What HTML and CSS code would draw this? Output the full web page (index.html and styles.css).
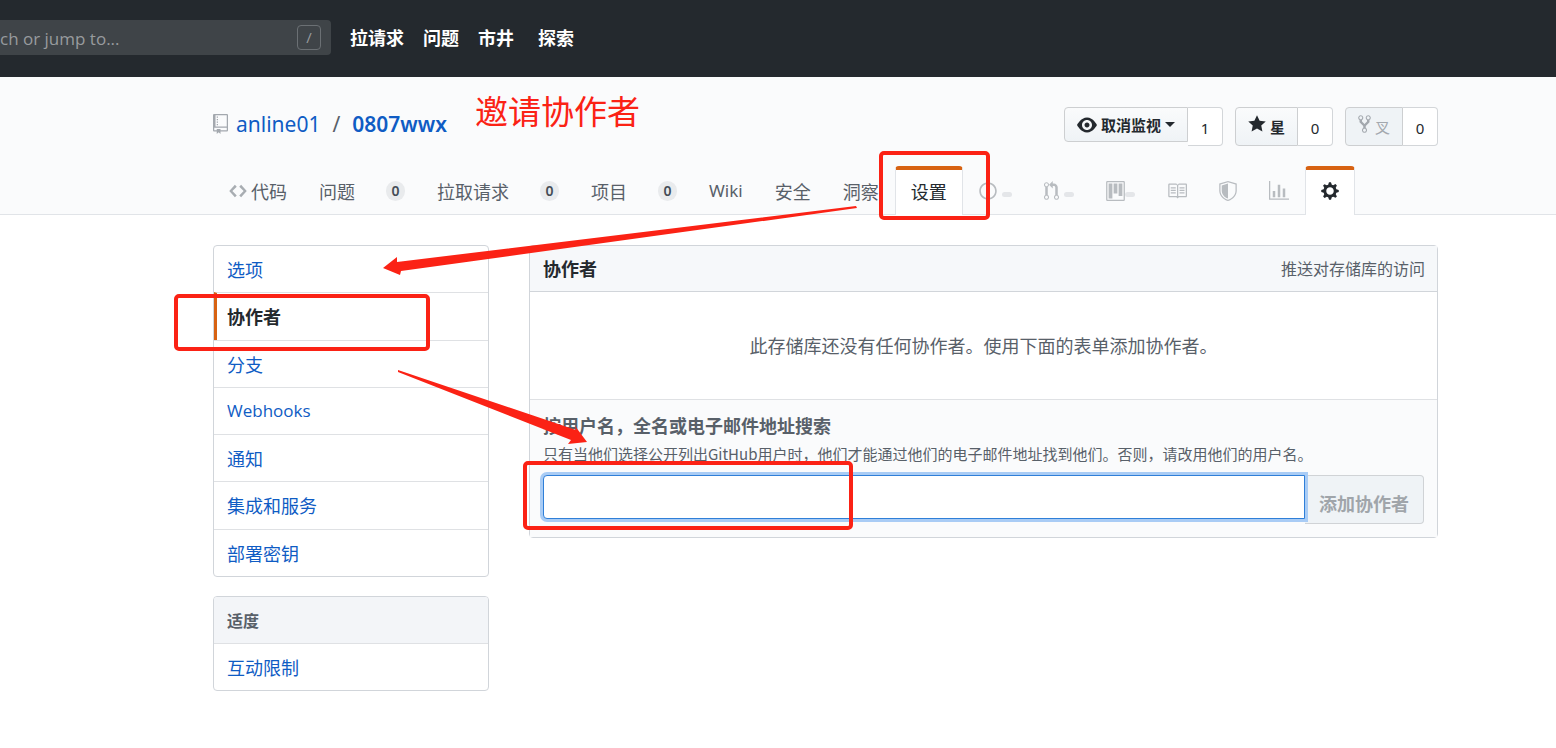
FILE: index.html
```html
<!DOCTYPE html>
<html lang="zh-CN">
<head>
<meta charset="utf-8">
<title>协作者</title>
<link rel="stylesheet" href="styles.css">
</head>
<body>
<header class="topbar">
  <form class="search">
    <input class="search-input" type="text" placeholder="ch or jump to..." aria-label="Search">
    <span class="slash">/</span>
  </form>
  <nav class="topnav">
    <a href="#">拉请求</a><a href="#">问题</a><a href="#">市井</a><a href="#" class="topnav-last">探索</a>
  </nav>
</header>

<div class="pagehead">
  <div class="repo-row">
    <h1 class="repo-title">
      <svg class="icon-muted" width="15" height="20" viewBox="0 0 12 16" fill="currentColor"><path d="M4 9H3V8h1v1zm0-3H3v1h1V6zm0-2H3v1h1V4zm0-2H3v1h1V2zm8-1v12c0 .55-.45 1-1 1H6v2l-1.500-1.500L3 16v-2H1c-.55 0-1-.45-1-1V1c0-.55.45-1 1-1h10c.55 0 1 .45 1 1zm-1 10H1v2h2v-1h3v1h5v-2zm0-10H2v9h9V1z"/></svg>
      <a href="#">anline01</a><span class="divider">/</span><a href="#" class="repo-name">0807wwx</a>
    </h1>
    <div class="actions">
      <div class="action">
        <button class="btn btn-watch" type="button">
          <svg width="20" height="20" viewBox="0 0 16 16" fill="currentColor"><path d="M8.060 2C3 2 0 8 0 8s3 6 8.060 6C13 14 16 8 16 8s-3-6-7.940-6zM8 12c-2.200 0-4-1.780-4-4 0-2.200 1.800-4 4-4 2.220 0 4 1.800 4 4 0 2.220-1.780 4-4 4zm2-4c0 1.110-.89 2-2 2-1.110 0-2-.89-2-2 0-1.110.89-2 2-2 1.110 0 2 .89 2 2z"/></svg>
          取消监视<span class="caret"></span>
        </button><a href="#" class="count">1</a>
      </div>
      <div class="action">
        <button class="btn" type="button">
          <svg class="raised" width="18" height="20" viewBox="0 0 14 16" fill="currentColor"><path d="M14 6l-4.900-.64L7 1 4.900 5.360 0 6l3.600 3.260L2.670 14 7 11.670 11.330 14l-.93-4.740z"/></svg>
          星
        </button><a href="#" class="count">0</a>
      </div>
      <div class="action">
        <button class="btn btn-fork" type="button" disabled>
          <svg class="raised" width="13" height="20" viewBox="0 0 10 16" fill="currentColor"><path d="M8 1a1.993 1.993 0 0 0-1 3.720V6L5 8 3 6V4.720A1.993 1.993 0 0 0 2 1a1.993 1.993 0 0 0-1 3.720V6.500l3 3v1.780A1.993 1.993 0 0 0 5 15a1.993 1.993 0 0 0 1-3.720V9.500l3-3V4.720A1.993 1.993 0 0 0 8 1zM2 4.200C1.340 4.200.8 3.650.8 3c0-.65.55-1.200 1.200-1.200.65 0 1.200.55 1.200 1.200 0 .65-.55 1.200-1.200 1.200zm3 10c-.66 0-1.200-.55-1.200-1.200 0-.65.55-1.200 1.200-1.200.65 0 1.200.55 1.200 1.200 0 .65-.55 1.200-1.200 1.200zm3-10c-.66 0-1.200-.55-1.200-1.200 0-.65.55-1.200 1.200-1.200.65 0 1.200.55 1.200 1.200 0 .65-.55 1.200-1.200 1.200z"/></svg>
          叉
        </button><a href="#" class="count">0</a>
      </div>
    </div>
  </div>

  <nav class="tabs">
    <a href="#" class="tab tab-code"><svg width="18" height="20" viewBox="0 0 14 16" fill="currentColor"><path d="M9.500 3L8 4.500 11.500 8 8 11.500 9.500 13 14 8 9.500 3zm-5 0L0 8l4.500 5L6 11.500 2.500 8 6 4.500 4.500 3z"/></svg>代码</a>
    <a href="#" class="tab tab-counted">问题<span class="badge">0</span></a>
    <a href="#" class="tab tab-counted">拉取请求<span class="badge">0</span></a>
    <a href="#" class="tab tab-counted">项目<span class="badge">0</span></a>
    <a href="#" class="tab tab-latin">Wiki</a>
    <a href="#" class="tab">安全</a>
    <a href="#" class="tab">洞察</a>
    <a href="#" class="tab selected">设置</a>
    <a href="#" class="tab tab-icon" aria-label="Issues"><svg width="18" height="20" viewBox="0 0 14 16" fill="currentColor"><path d="M7 2.300c3.140 0 5.700 2.560 5.700 5.700s-2.560 5.700-5.700 5.700A5.710 5.710 0 0 1 1.300 8c0-3.140 2.560-5.700 5.700-5.700zM7 1C3.140 1 0 4.140 0 8s3.140 7 7 7 7-3.140 7-7-3.140-7-7-7zm1 3H6v5h2V4zm0 6H6v2h2v-2z"/></svg><span class="dash"></span></a>
    <a href="#" class="tab tab-icon" aria-label="Pull requests"><svg width="15" height="20" viewBox="0 0 12 16" fill="currentColor"><path d="M11 11.280V5c-.03-.78-.34-1.470-.94-2.060C9.460 2.350 8.780 2.030 8 2H7V0L4 3l3 3V4h1c.27.02.48.11.69.31.21.2.3.42.31.69v6.280A1.993 1.993 0 0 0 10 15a1.993 1.993 0 0 0 1-3.720zm-1 2.920c-.66 0-1.200-.55-1.200-1.200 0-.65.55-1.200 1.200-1.200.65 0 1.200.55 1.200 1.200 0 .65-.55 1.200-1.200 1.200zM4 3c0-1.110-.89-2-2-2a1.993 1.993 0 0 0-1 3.720v6.560A1.993 1.993 0 0 0 2 15a1.993 1.993 0 0 0 1-3.720V4.720c.59-.34 1-.98 1-1.720zm-.8 10c0 .66-.55 1.200-1.200 1.200-.65 0-1.200-.55-1.200-1.200 0-.65.55-1.200 1.200-1.200.65 0 1.200.55 1.200 1.200zM2 4.200C1.340 4.200.8 3.650.8 3c0-.65.55-1.200 1.200-1.200.65 0 1.200.55 1.200 1.200 0 .65-.55 1.200-1.200 1.200z"/></svg><span class="dash"></span></a>
    <a href="#" class="tab tab-icon tab-board" aria-label="Projects"><svg width="19" height="20" viewBox="0 0 15 16" fill="currentColor"><path fill-rule="evenodd" d="M10 12h3V2h-3v10zm-4-2h3V2H6v8zm-4 4h3V2H2v12zm-1 1h13V1H1v14zM14 0H1a1 1 0 0 0-1 1v14a1 1 0 0 0 1 1h13a1 1 0 0 0 1-1V1a1 1 0 0 0-1-1z"/></svg><span class="dash"></span></a>
    <a href="#" class="tab tab-icon" aria-label="Wiki pages"><svg width="20" height="20" viewBox="0 0 16 16" fill="currentColor"><path d="M3 5h4v1H3V5zm0 3h4V7H3v1zm0 2h4V9H3v1zm11-5h-4v1h4V5zm0 2h-4v1h4V7zm0 2h-4v1h4V9zm2-6v9c0 .55-.45 1-1 1H9.500l-1 1-1-1H2c-.55 0-1-.45-1-1V3c0-.55.45-1 1-1h5.500l1 1 1-1H15c.55 0 1 .45 1 1zm-8 .5L7.500 3H2v9h6V3.500zm7-.5H9.500l-.5.5V12h6V3z"/></svg></a>
    <a href="#" class="tab tab-icon" aria-label="Security"><svg width="18" height="20" viewBox="0 0 14 16" fill="currentColor"><path d="M0 2l7-2 7 2v6.020C14 12.690 8.690 16 7 16c-1.690 0-7-3.310-7-7.980V2zm1 .75L7 1l6 1.750v5.268C13 12.104 8.449 15 7 15c-1.449 0-6-2.896-6-6.982V2.750zm1 .75L7 2v12c-1.207 0-5-2.482-5-5.985V3.500z" fill-rule="evenodd"/></svg></a>
    <a href="#" class="tab tab-icon" aria-label="Graphs"><svg width="20" height="20" viewBox="0 0 16 16" fill="currentColor"><path d="M16 14v1H0V0h1v14h15zM5 13H3V8h2v5zm4 0H7V3h2v10zm4 0h-2V6h2v7z"/></svg></a>
    <a href="#" class="tab tab-icon selected" aria-label="Settings"><svg width="18" height="20" viewBox="0 0 14 16" fill="currentColor"><path fill-rule="evenodd" d="M14 8.770v-1.600l-1.940-.64-.45-1.090.88-1.840-1.130-1.130-1.810.91-1.090-.45-.69-1.920h-1.600l-.63 1.940-1.110.45-1.840-.88-1.130 1.130.91 1.810-.45 1.090L0 7.230v1.590l1.940.64.45 1.090-.88 1.840 1.130 1.130 1.810-.91 1.090.45.69 1.920h1.590l.63-1.940 1.110-.45 1.840.88 1.130-1.130-.92-1.810.47-1.090L14 8.750v.02zM7 11c-1.660 0-3-1.340-3-3s1.340-3 3-3 3 1.340 3 3-1.340 3-3 3z"/></svg></a>
  </nav>
</div>

<main class="content">
  <aside class="sidebar">
    <nav class="menu menu-main">
      <a href="#">选项</a>
      <a href="#" class="current">协作者</a>
      <a href="#">分支</a>
      <a href="#" class="menu-latin">Webhooks</a>
      <a href="#">通知</a>
      <a href="#">集成和服务</a>
      <a href="#">部署密钥</a>
    </nav>
    <nav class="menu">
      <h2 class="menu-heading">适度</h2>
      <a href="#">互动限制</a>
    </nav>
  </aside>

  <section class="box">
    <div class="box-header"><h2>协作者</h2><span>推送对存储库的访问</span></div>
    <p class="box-empty">此存储库还没有任何协作者。使用下面的表单添加协作者。</p>
    <form class="box-form">
      <label for="member">按用户名，全名或电子邮件地址搜索</label>
      <p class="hint">只有当他们选择公开列出GitHub用户时，他们才能通过他们的电子邮件地址找到他们。否则，请改用他们的用户名。</p>
      <div class="field">
        <input id="member" class="member-input" type="text">
        <button class="add" type="button" disabled>添加协作者</button>
      </div>
    </form>
  </section>
</main>

<div class="note">邀请协作者</div>
<svg class="marks" width="1000" height="540" viewBox="0 0 1000 540">
  <g fill="none" stroke="#fb2215" stroke-width="4">
    <rect x="881" y="153" width="107" height="65" rx="3"/>
    <rect x="176" y="296" width="252" height="53" rx="3"/>
    <rect x="525" y="463" width="326" height="65" rx="3"/>
  </g>
  <g fill="#fb2215">
    <path d="M383 268L397 257L397 262L856 206L857 208L401 271L400 275Z"/>
    <path d="M398 370L576 430L575 426L587 442L568 444L571 440L398 372Z"/>
  </g>
</svg>
</body>
</html>
```

FILE: styles.css
```css
* { box-sizing: border-box; }
body {
  position: relative;
  margin: 0;
  background: #fff;
  color: #24292e;
  font: 18px/28px "Noto Sans CJK SC", sans-serif;
}
a { color: #0f5cc4; text-decoration: none; }
h1, h2, p { margin: 0; font-size: 18px; }
svg { display: block; flex: none; }
button, input { font-family: inherit; }

.topbar {
  display: flex;
  align-items: center;
  gap: 19px;
  padding: 20px 0 22px;
  background: #24292e;
}
.search {
  display: flex;
  align-items: center;
  width: 331px;
  height: 35px;
  padding-right: 10px;
  border-radius: 0 4px 4px 0;
  background: #3f4448;
}
.search-input {
  flex: 1;
  min-width: 0;
  padding: 2px 0 0;
  border: 0;
  outline: 0;
  background: none;
  color: #fff;
  font: 17px/24px "Open Sans", sans-serif;
}
.search-input::placeholder { color: #989b9e; opacity: 1; }
.slash {
  width: 24px;
  border: 1px solid #6b7074;
  border-radius: 4px;
  color: #989b9e;
  font: 15px/23px "Open Sans", sans-serif;
  text-align: center;
}
.topnav { display: flex; gap: 19px; line-height: 35px; }
.topnav a { color: #fff; font-weight: 700; }
.topnav-last { margin-left: 5px; }

.pagehead {
  padding: 30px 118px 0 213px;
  border-bottom: 1px solid #e1e4e8;
  background: #fafbfc;
}
.repo-row {
  display: flex;
  justify-content: space-between;
  align-items: flex-start;
  padding-bottom: 20px;
}
.repo-title {
  display: flex;
  align-items: center;
  font: 400 21px/34px "Noto Sans", sans-serif;
}
.repo-title svg { margin-right: 8px; }
.icon-muted { color: #a3a8ae; }
.divider { margin: 0 12px; color: #586069; }
.repo-name { font-weight: 600; }

.actions { display: flex; gap: 12px; }
.action { display: flex; align-items: flex-start; }
.btn {
  display: flex;
  align-items: center;
  gap: 4px;
  height: 39px;
  padding: 0 12px;
  border: 1px solid #cdcfd1;
  border-radius: 4px 0 0 4px;
  background: linear-gradient(#fafbfc, #eff3f6);
  color: #24292e;
  font-size: 15px;
  font-weight: 600;
}
.btn-watch { height: 35px; }
.btn-fork { background: #eff3f6; color: #a3a8ae; font-weight: 400; }
.raised { margin-bottom: 6px; }
.caret { border: 5px solid transparent; border-top-color: currentColor; border-bottom: 0; }
.count {
  min-width: 35px;
  height: 39px;
  padding-top: 2px;
  border: 1px solid #d3d6d9;
  border-left: 0;
  border-radius: 0 4px 4px 0;
  background: #fff;
  color: #24292e;
  font: 15px/36px "Noto Sans", sans-serif;
  text-align: center;
}

.tabs { display: flex; margin-bottom: -1px; }
.tab {
  display: flex;
  align-items: center;
  height: 49px;
  padding: 0 15px 3px;
  border: 1px solid transparent;
  border-top: 4px solid transparent;
  border-bottom: 0;
  border-radius: 4px 4px 0 0;
  color: #586069;
  white-space: nowrap;
}
.tab-code { gap: 4px; }
.tab-code svg { color: #a8adb2; }
.tab-counted { gap: 31px; }
.tab-latin { font: 17px/28px "Noto Sans", sans-serif; }
.badge {
  min-width: 19px;
  border-radius: 10px;
  background: #e9ebed;
  color: #444d56;
  font: 600 14px/20px "Noto Sans", sans-serif;
  text-align: center;
}
.tab-icon { gap: 5px; color: #b8bcc0; }
.tab-board { gap: 0; }
.dash { width: 10px; height: 5px; margin-top: 7px; border-radius: 3px; background: #e4e6e9; }
.tab.selected {
  border-color: #d76212 #e1e4e8 transparent;
  background: #fff;
  color: #24292e;
}

.content {
  display: flex;
  align-items: flex-start;
  gap: 40px;
  padding: 30px 118px 57px 213px;
}
.sidebar { display: grid; flex: none; width: 276px; gap: 19px; }
.menu {
  display: grid;
  overflow: hidden;
  border: 1px solid #d1d5da;
  border-radius: 4px;
}
.menu-main { min-height: 332px; }
.menu a, .menu-heading { padding: 9px 13px; }
.menu a + a, .menu-heading + a { border-top: 1px solid #dfe1e4; }
.menu .menu-latin { font-family: "Open Sans", sans-serif; font-size: 17px; }
.menu .current {
  padding-left: 10px;
  border-left: 3px solid #d76212;
  color: #24292e;
  font-weight: 700;
}
.menu-heading { background: #f3f5f8; color: #586069; font-size: 16px; font-weight: 600; }

.box { flex: 1; min-width: 0; border: 1px solid #d1d5da; border-radius: 4px; }
.box-header {
  display: flex;
  justify-content: space-between;
  align-items: center;
  padding: 8px 12px 9px 13px;
  border-bottom: 1px solid #d1d5da;
  background: #f6f8fa;
}
.box-header span { color: #586069; font-size: 16px; }
.box-empty { padding: 39px 13px 40px; color: #586069; text-align: center; }
.box-form {
  padding: 11px 13px 13px;
  border-top: 1px solid #dfe1e4;
  background: #fafbfc;
  color: #586069;
}
.box-form label { display: block; font-weight: 700; }
.hint { padding: 3px 0 9px; font-size: 15px; line-height: 24px; }
.field { display: flex; align-items: flex-start; }
.member-input {
  position: relative;
  flex: 1;
  min-width: 0;
  height: 44px;
  padding: 0 10px;
  border: 1px solid #2f7fd8;
  border-radius: 4px 0 0 4px;
  outline: 0;
  box-shadow: 0 0 0 3px #a9ccf5;
  font-size: 18px;
}
.add {
  padding: 14px 14px 6px;
  border: 1px solid #d0d3d6;
  border-left: 0;
  border-radius: 0 4px 4px 0;
  background: #eff3f6;
  color: #a0a5aa;
  font-size: 18px;
  font-weight: 700;
  line-height: 27px;
}

/* Annotations drawn over the page */
.note {
  position: absolute;
  top: 86px;
  left: 475px;
  color: #fb2215;
  font-size: 33px;
  line-height: 48px;
}
.marks { position: absolute; top: 0; left: 0; pointer-events: none; }
```
